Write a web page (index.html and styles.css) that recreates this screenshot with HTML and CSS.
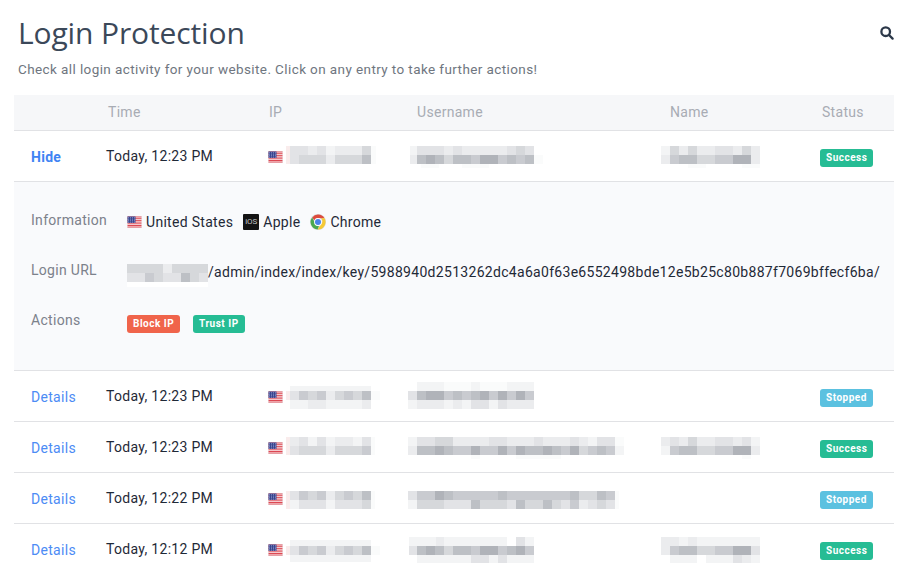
FILE: index.html
```html
<!DOCTYPE html>
<html lang="en">
<head>
<meta charset="utf-8">
<title>Login Protection</title>
<link rel="stylesheet" href="styles.css">
</head>
<body>
<svg class="defs" width="0" height="0" aria-hidden="true">
  <symbol id="us" viewBox="0 0 15 12">
    <rect class="flag-edge" width="15" height="12"/>
    <rect class="flag-white" x="0.5" y="0.5" width="14" height="11"/>
    <path class="flag-red" d="M.5 1h14M.5 2.7h14M.5 4.4h14M.5 6.1h14M.5 7.8h14M.5 9.5h14M.5 11h14"/>
    <rect class="flag-blue" x="0.5" y="0.5" width="8" height="6.4"/>
    <path class="flag-stars" d="M1 1.7h7M1 3.2h7M1 4.7h7M1 6.2h7"/>
  </symbol>
</svg>
<main class="page">
  <header class="top">
    <div>
      <h1 class="title">Login Protection</h1>
      <p class="lead">Check all login activity for your website. Click on any entry to take further actions!</p>
    </div>
    <svg class="search" width="14" height="14" viewBox="0 0 14 14" aria-label="Search"><circle cx="5.7" cy="5.7" r="4.3"/><path d="M9 9l3.6 3.6"/></svg>
  </header>

  <section class="log">
    <div class="head">
      <span></span><span>Time</span><span>IP</span><span>Username</span><span>Name</span><span>Status</span>
    </div>

    <div class="row">
      <a class="link link-active" href="#">Hide</a>
      <span class="time">Today, 12:23 PM</span>
      <span class="ip"><svg class="flag"><use href="#us"/></svg>
        <svg class="blur blur-ip">
          <path class="p" d="M0 19.5h4M0 28.5h4"/>
          <path class="z" d="M85 19.5h5M85 28.5h5"/>
          <path class="a" d="M40 19.5h9"/>
          <path class="b" d="M22 19.5h9M49 19.5h27M40 28.5h9"/>
          <path class="c" d="M4 19.5h18M31 19.5h9M4 28.5h9"/>
          <path class="d" d="M76 19.5h9M13 28.5h27M49 28.5h27"/>
          <path class="f" d="M76 28.5h9"/>
        </svg></span>
      <svg class="blur blur-user">
        <path class="z" d="M13 32.5h18M54 32.5h27M126 28.5h9"/>
        <path class="a" d="M2 19.5h7"/>
        <path class="b" d="M2 28.5h7M36 19.5h9M54 19.5h45"/>
        <path class="c" d="M9 19.5h27M45 19.5h9M99 19.5h9M117 19.5h9"/>
        <path class="d" d="M108 19.5h9M36 28.5h9"/>
        <path class="e" d="M63 28.5h9M90 28.5h9M108 28.5h9"/>
        <path class="f" d="M9 28.5h9M27 28.5h9M45 28.5h18M99 28.5h9M117 28.5h9"/>
        <path class="g" d="M18 28.5h9M72 28.5h18"/>
      </svg>
      <svg class="blur blur-name">
        <path class="z" d="M27 32.5h18M81 32.5h18"/>
        <path class="a" d="M0 19.5h9"/>
        <path class="b" d="M18 19.5h9M36 19.5h18M72 19.5h9M90 19.5h9M0 28.5h9M90 28.5h9"/>
        <path class="c" d="M54 19.5h18"/>
        <path class="d" d="M9 19.5h9M27 19.5h9M81 19.5h9M36 28.5h18"/>
        <path class="e" d="M9 28.5h9M54 28.5h18"/>
        <path class="f" d="M18 28.5h18"/>
        <path class="g" d="M72 28.5h18"/>
      </svg>
      <span class="badge-cell"><span class="badge success">Success</span></span>
    </div>

    <div class="detail">
      <div class="detail-row">
        <span class="label">Information</span>
        <span class="value">
          <span class="fact"><svg class="flag"><use href="#us"/></svg>United States</span>
          <span class="fact"><span class="ios">iOS</span>Apple</span>
          <span class="fact"><svg class="chrome" width="16" height="16" viewBox="0 0 16 16">
            <circle class="ch-edge" cx="8" cy="8" r="8"/>
            <path class="ch-red" d="M8 .6a7.4 7.4 0 0 1 6.5 3.7H8a3.8 3.8 0 0 0-3.5 2.2L2.2 3.4A7.4 7.4 0 0 1 8 .6z"/>
            <path class="ch-yellow" d="M14.5 4.3A7.4 7.4 0 0 1 7.6 15.4l3.2-5A3.8 3.8 0 0 0 11 4.3z"/>
            <path class="ch-green" d="M2.2 3.4l2.6 5A3.8 3.8 0 0 0 9 11.7l-1.4 3.7A7.4 7.4 0 0 1 2.2 3.4z"/>
            <circle class="ch-ring" cx="8" cy="8" r="3.9"/>
            <circle class="ch-blue" cx="8" cy="8" r="3"/>
          </svg>Chrome</span>
        </span>
      </div>
      <div class="detail-row">
        <span class="label">Login URL</span>
        <span class="value value-url">
          <svg class="blur blur-url">
            <path class="w" d="M0 20.5h81"/>
            <path class="b" d="M36 4.5h9"/>
            <path class="c" d="M0 13.5h18M36 13.5h18M72 13.5h9"/>
            <path class="d" d="M0 4.5h36M45 4.5h36M27 13.5h9M63 13.5h9"/>
            <path class="e" d="M18 13.5h9"/>
            <path class="f" d="M54 13.5h9"/>
          </svg><span>/admin/index/index/key/5988940d2513262dc4a6a0f63e6552498bde12e5b25c80b887f7069bffecf6ba/</span>
        </span>
      </div>
      <div class="detail-row">
        <span class="label">Actions</span>
        <span class="value value-actions">
          <a class="badge danger" href="#">Block IP</a>
          <a class="badge success" href="#">Trust IP</a>
        </span>
      </div>
    </div>

    <div class="row">
      <a class="link" href="#">Details</a>
      <span class="time">Today, 12:23 PM</span>
      <span class="ip"><svg class="flag"><use href="#us"/></svg>
        <svg class="blur blur-ip">
          <path class="a" d="M4 19.5h81"/>
          <path class="p" d="M0 24.5h4"/>
          <path class="z" d="M85 24.5h9"/>
          <path class="a" d="M4 33.5h18M40 33.5h36"/>
          <path class="b" d="M22 33.5h18M76 33.5h9M40 24.5h9"/>
          <path class="c" d="M4 24.5h9"/>
          <path class="d" d="M22 24.5h9M49 24.5h9M67 24.5h9"/>
          <path class="e" d="M13 24.5h9M31 24.5h9M58 24.5h9"/>
          <path class="f" d="M76 24.5h9"/>
        </svg></span>
      <svg class="blur blur-user">
        <path class="z" d="M36 15.5h27M72 15.5h27"/>
        <path class="a" d="M9 15.5h27M63 15.5h9M99 15.5h27"/>
        <path class="c" d="M0 24.5h9"/>
        <path class="a" d="M0 33.5h9M36 33.5h9M54 33.5h9M81 33.5h9"/>
        <path class="b" d="M9 33.5h27M45 33.5h9M99 33.5h27"/>
        <path class="c" d="M63 33.5h18M90 33.5h9"/>
        <path class="e" d="M36 24.5h9M54 24.5h9M81 24.5h9M99 24.5h9M117 24.5h9"/>
        <path class="f" d="M9 24.5h9M45 24.5h9M63 24.5h9"/>
        <path class="g" d="M18 24.5h18M72 24.5h9M90 24.5h9M108 24.5h9"/>
      </svg>
      <span></span>
      <span class="badge-cell"><span class="badge info">Stopped</span></span>
    </div>

    <div class="row">
      <a class="link" href="#">Details</a>
      <span class="time">Today, 12:23 PM</span>
      <span class="ip"><svg class="flag"><use href="#us"/></svg>
        <svg class="blur blur-ip">
          <path class="p" d="M0 19.5h4M0 28.5h4"/>
          <path class="z" d="M85 19.5h4M85 28.5h4"/>
          <path class="a" d="M22 19.5h9M40 19.5h9M67 19.5h9"/>
          <path class="b" d="M4 19.5h9M49 19.5h18M40 28.5h9"/>
          <path class="c" d="M13 19.5h9M31 19.5h9M76 19.5h9M4 28.5h9"/>
          <path class="d" d="M13 28.5h27M49 28.5h27"/>
          <path class="e" d="M76 28.5h9"/>
        </svg></span>
      <svg class="blur blur-user">
        <path class="z" d="M63 32.5h9M108 32.5h45M207 19.5h9"/>
        <path class="a" d="M0 19.5h9M180 19.5h9M207 28.5h9"/>
        <path class="b" d="M45 19.5h36M99 19.5h27M135 19.5h27M171 19.5h9M0 28.5h9"/>
        <path class="c" d="M9 19.5h18M81 19.5h18M126 19.5h9M162 19.5h9M189 19.5h18"/>
        <path class="d" d="M27 19.5h18M171 28.5h9"/>
        <path class="e" d="M45 28.5h18M72 28.5h18M99 28.5h9M153 28.5h9M180 28.5h9M198 28.5h9"/>
        <path class="f" d="M9 28.5h18M36 28.5h9M117 28.5h18M144 28.5h9M189 28.5h9"/>
        <path class="g" d="M27 28.5h9M63 28.5h9M90 28.5h9M108 28.5h9M135 28.5h9M162 28.5h9"/>
      </svg>
      <svg class="blur blur-name">
        <path class="z" d="M81 32.5h9"/>
        <path class="a" d="M90 19.5h9M0 28.5h9"/>
        <path class="b" d="M0 19.5h9M18 19.5h9M36 19.5h18M72 19.5h9M90 28.5h9"/>
        <path class="c" d="M9 19.5h9M54 19.5h18M81 19.5h9"/>
        <path class="d" d="M27 19.5h9M36 28.5h18"/>
        <path class="e" d="M9 28.5h9M54 28.5h18"/>
        <path class="f" d="M18 28.5h18"/>
        <path class="g" d="M72 28.5h18"/>
      </svg>
      <span class="badge-cell"><span class="badge success">Success</span></span>
    </div>

    <div class="row">
      <a class="link" href="#">Details</a>
      <span class="time">Today, 12:22 PM</span>
      <span class="ip"><svg class="flag"><use href="#us"/></svg>
        <svg class="blur blur-ip">
          <path class="p" d="M0 22.5h4M0 31.5h4"/>
          <path class="z" d="M85 22.5h4M85 31.5h4"/>
          <path class="a" d="M4 31.5h9M40 31.5h9"/>
          <path class="b" d="M40 22.5h9"/>
          <path class="c" d="M4 22.5h9M13 31.5h27M49 31.5h27"/>
          <path class="d" d="M22 22.5h9M49 22.5h9M67 22.5h9M76 31.5h9"/>
          <path class="e" d="M13 22.5h9M31 22.5h9M58 22.5h9"/>
          <path class="f" d="M76 22.5h9"/>
        </svg></span>
      <svg class="blur blur-user">
        <path class="z" d="M207 22.5h4M207 31.5h4"/>
        <path class="a" d="M0 31.5h9"/>
        <path class="b" d="M171 31.5h9"/>
        <path class="c" d="M0 22.5h9M36 31.5h27M99 31.5h9M153 31.5h9M180 31.5h9M198 31.5h9"/>
        <path class="d" d="M171 22.5h18M9 31.5h27M72 31.5h27M117 31.5h18M144 31.5h9M189 31.5h9"/>
        <path class="e" d="M9 22.5h18M45 22.5h45M99 22.5h63M198 22.5h9M162 31.5h9"/>
        <path class="f" d="M36 22.5h9M90 22.5h9M162 22.5h9M189 22.5h9M63 31.5h9M108 31.5h9M135 31.5h9"/>
        <path class="g" d="M27 22.5h9"/>
      </svg>
      <span></span>
      <span class="badge-cell"><span class="badge info">Stopped</span></span>
    </div>

    <div class="row">
      <a class="link" href="#">Details</a>
      <span class="time">Today, 12:12 PM</span>
      <span class="ip"><svg class="flag"><use href="#us"/></svg>
        <svg class="blur blur-ip">
          <path class="a" d="M4 20.5h81"/>
          <path class="a" d="M4 33h81"/>
          <path class="p" d="M0 26.5h4"/>
          <path class="z" d="M85 26.5h9"/>
          <path class="b" d="M40 26.5h9"/>
          <path class="c" d="M4 26.5h9"/>
          <path class="d" d="M22 26.5h9M49 26.5h9M67 26.5h9"/>
          <path class="e" d="M13 26.5h9M31 26.5h9M58 26.5h9"/>
          <path class="f" d="M76 26.5h9"/>
        </svg></span>
      <svg class="blur blur-user">
        <path class="a" d="M1 17.5h27M36 17.5h63M117 17.5h9"/>
        <path class="b" d="M28 17.5h8"/>
        <path class="c" d="M108 17.5h9M1 26.5h8"/>
        <path class="a" d="M9 34.5h54M81 34.5h9M99 34.5h27"/>
        <path class="c" d="M63 34.5h18M90 34.5h9"/>
        <path class="d" d="M36 26.5h9"/>
        <path class="e" d="M63 26.5h9M90 26.5h9M117 26.5h9"/>
        <path class="f" d="M9 26.5h9M27 26.5h9M45 26.5h18M99 26.5h9"/>
        <path class="g" d="M18 26.5h9M72 26.5h18M108 26.5h9"/>
      </svg>
      <svg class="blur blur-name">
        <path class="a" d="M18 17.5h9M36 17.5h63M9 34.5h27M45 34.5h27M90 34.5h9"/>
        <path class="b" d="M0 17.5h18M27 17.5h9M0 26.5h9M81 34.5h9"/>
        <path class="c" d="M90 26.5h9M72 34.5h9"/>
        <path class="d" d="M36 26.5h18"/>
        <path class="e" d="M9 26.5h9M54 26.5h18"/>
        <path class="f" d="M18 26.5h18"/>
        <path class="g" d="M72 26.5h18"/>
      </svg>
      <span class="badge-cell"><span class="badge success">Success</span></span>
    </div>
  </section>
</main>
</body>
</html>
```

FILE: styles.css
```css
html, body {
  margin: 0;
  height: 100%;
  overflow: hidden;
  background: #fff;
}

body {
  font-family: Roboto, "Liberation Sans", sans-serif;
  font-size: 14px;
  letter-spacing: 0.3px;
  color: #1f2937;
}

.defs { position: absolute; }

.page { padding: 0 12px 0 14px; }

.top {
  display: flex;
  justify-content: space-between;
  align-items: flex-start;
  height: 95px;
  padding-left: 4px;
}

.title {
  margin: 13px 0 0;
  font-family: "Open Sans", sans-serif;
  font-size: 30px;
  font-weight: 400;
  line-height: 40px;
  letter-spacing: -0.13px;
  color: #3b4859;
}

.lead {
  margin: 6px 0 0;
  font-size: 13.5px;
  line-height: 20px;
  letter-spacing: 0.4px;
  color: #6f7680;
}

.search {
  margin: 26px 0 0;
  fill: none;
  stroke: #2c3849;
  stroke-width: 2.3;
  stroke-linecap: round;
}

.head, .row {
  display: grid;
  grid-template-columns: 92px 162px 140px 253px 159px 74px;
  box-sizing: border-box;
  border-bottom: 1px solid #e1e2e5;
}

.head {
  grid-template-columns: 94px 161px 148px 253px 152px 72px;
  align-items: center;
  height: 36px;
  padding-bottom: 2px;
  background: #f6f7f9;
  color: #a8acb4;
}

.row {
  align-items: center;
  height: 51px;
}

.link {
  padding: 2px 0 0 17px;
  color: #4c8bf5;
  text-decoration: none;
}

.link-active {
  font-weight: 700;
  color: #3f84f3;
}

.ip {
  display: flex;
  align-items: center;
  gap: 3px;
  height: 50px;
}

.flag {
  flex: none;
  width: 15px;
  height: 12px;
}

.ip .flag { margin-top: 2px; }

.flag-edge { fill: #e6e7ea; }
.flag-white { fill: #fff; }
.flag-red { fill: none; stroke: #d8333f; stroke-width: 0.9; }
.flag-blue { fill: #38458f; }
.flag-stars { fill: none; stroke: #b4bce6; stroke-width: 0.6; stroke-dasharray: 1 1; }

.blur {
  display: block;
  height: 50px;
  fill: none;
  stroke-width: 9;
  shape-rendering: crispEdges;
}

.blur-ip { width: 96px; }
.blur-user { width: 225px; }
.blur-name { width: 110px; }
.blur-url {
  flex: none;
  width: 81px;
  height: 23px;
  margin-top: 7px;
}

.p { stroke: #f9ecec; }
.z { stroke: #fafbfb; }
.w { stroke: #fff; }
.a { stroke: #f3f4f5; }
.b { stroke: #ebecee; }
.c { stroke: #e2e3e6; }
.d { stroke: #d6d8db; }
.e { stroke: #c9cbd0; }
.f { stroke: #bdc0c5; }
.g { stroke: #b0b3b9; }

.badge-cell {
  display: flex;
  padding-top: 4px;
}

.badge {
  display: inline-block;
  box-sizing: border-box;
  height: 18px;
  padding: 0 6px;
  border-radius: 3px;
  font-size: 10px;
  font-weight: 700;
  line-height: 18px;
  letter-spacing: 0.5px;
  color: #fff;
  text-decoration: none;
}

.success { background: #26bc94; }
.info { background: #5bc1e0; }
.danger { background: #f0644b; }

.detail {
  box-sizing: border-box;
  height: 189px;
  padding: 13px 0 0 17px;
  background: #f9fafc;
  border-bottom: 1px solid #e1e2e5;
}

.detail-row {
  display: flex;
  align-items: center;
  height: 50px;
}

.label {
  flex: none;
  width: 96px;
  color: #7c818b;
}

.value {
  display: flex;
  align-items: center;
  gap: 10px;
  padding-top: 4px;
  white-space: nowrap;
}

.value-url { gap: 0; }

.value-actions {
  gap: 13px;
  padding-top: 8px;
}

.fact {
  display: inline-flex;
  align-items: center;
  gap: 4px;
}

.ios {
  display: block;
  width: 16px;
  height: 16px;
  background: #141414;
  border-radius: 1px;
  font-size: 8px;
  line-height: 16px;
  letter-spacing: 0;
  text-align: center;
  color: #c4c4c4;
}

.ch-edge { fill: #d9d9d9; }
.ch-red { fill: #dd4b3e; }
.ch-yellow { fill: #f6c934; }
.ch-green { fill: #4ba84f; }
.ch-ring { fill: #fff; }
.ch-blue { fill: #4a83e8; }
```
